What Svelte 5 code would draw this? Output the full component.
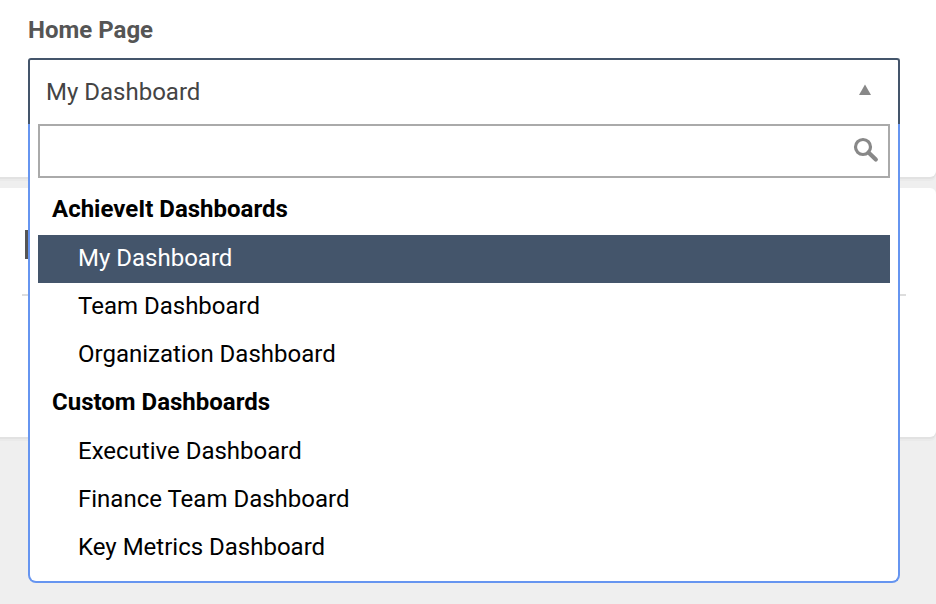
<script>
  const groups = [
    { name: 'AchieveIt Dashboards', items: ['My Dashboard', 'Team Dashboard', 'Organization Dashboard'] },
    { name: 'Custom Dashboards', items: ['Executive Dashboard', 'Finance Team Dashboard', 'Key Metrics Dashboard'] }
  ];

  let open = $state(true);
  let selected = $state('My Dashboard');
  let query = $state('');

  const visible = $derived(
    groups
      .map((g) => ({ ...g, items: g.items.filter((i) => i.toLowerCase().includes(query.toLowerCase())) }))
      .filter((g) => g.items.length)
  );

  function choose(item) {
    selected = item;
    open = false;
  }
</script>

<main>
  <section class="card first">
    <label for="home-page">Home Page</label>
    <div class="select">
      <button
        id="home-page"
        class="trigger"
        type="button"
        aria-haspopup="listbox"
        aria-expanded={open}
        onclick={() => (open = !open)}
      >
        <span>{selected}</span>
        <svg width="14" height="16" viewBox="0 0 14 16" aria-hidden="true"><path d="M7 0.5 13 11H1z" fill="#888" /></svg>
      </button>

      {#if open}
        <div class="panel">
          <div class="search">
            <input type="text" aria-label="Search dashboards" bind:value={query} />
            <svg width="26" height="26" viewBox="0 0 26 26" fill="none" stroke="#888" aria-hidden="true">
              <circle cx="10" cy="10" r="7.5" stroke-width="3.2" />
              <path d="M15.5 15.5 22.8 22.6" stroke-width="4.2" stroke-linecap="round" />
            </svg>
          </div>
          <div class="list" role="listbox" aria-label="Home Page">
            {#each visible as group}
              <div class="group" role="group" aria-label={group.name}>
                <strong>{group.name}</strong>
                {#each group.items as item}
                  <button
                    type="button"
                    role="option"
                    class="option"
                    class:active={item === selected}
                    aria-selected={item === selected}
                    onclick={() => choose(item)}>{item}</button>
                {/each}
              </div>
            {/each}
          </div>
        </div>
      {/if}
    </div>
  </section>

  <section class="card second">
    <div class="heading"></div>
    <hr />
  </section>
</main>

<style>
  :global(body) {
    background: #efefef;
  }

  main {
    display: flex;
    flex-direction: column;
    gap: 11px;
    min-height: 100vh;
    box-sizing: border-box;
    font: 24px/28px Roboto, sans-serif;
    color: #444;
  }

  .card {
    background: #fff;
    box-shadow: 0 2px 0 #e2e2e2, 0 4px 0 #eaeaea;
  }

  .first {
    padding: 16px 36px 53px 28px;
    border-radius: 0 0 6px 0;
  }

  label {
    display: block;
    margin-bottom: 14px;
    font-weight: 700;
    color: #555;
  }

  .select {
    position: relative;
  }

  button,
  input {
    box-sizing: border-box;
    width: 100%;
    font: inherit;
    outline: none;
  }

  .trigger {
    display: flex;
    align-items: center;
    justify-content: space-between;
    height: 66px;
    padding: 0 26px 0 16px;
    border: 2px solid #44556b;
    border-bottom: 0;
    border-radius: 3px 3px 0 0;
    background: #fff;
    color: #444;
    cursor: pointer;
  }

  .panel {
    position: absolute;
    z-index: 1;
    top: 100%;
    left: 0;
    right: 0;
    padding: 0 8px 9px;
    border: 2px solid #6695f0;
    border-top: 0;
    border-radius: 0 0 8px 8px;
    background: #fff;
  }

  .search {
    position: relative;
    margin-bottom: 9px;
  }

  .search input {
    display: block;
    height: 54px;
    padding: 0 48px 0 12px;
    border: 2px solid #aaa;
    border-radius: 0;
    background: #fff;
  }

  .search svg {
    position: absolute;
    top: 13px;
    right: 11px;
  }

  .list {
    display: flex;
    flex-direction: column;
    gap: 1px;
  }

  strong {
    display: block;
    padding: 8px 14px 12px;
    font-weight: 700;
    color: #000;
  }

  .option {
    display: block;
    height: 48px;
    padding: 9px 40px 11px;
    border: 0;
    background: none;
    color: #000;
    text-align: left;
    cursor: pointer;
  }

  .option.active {
    background: #44556b;
    color: #fff;
  }

  .second {
    padding: 42px 30px 141px 22px;
    border-radius: 0 6px 6px 0;
  }

  .heading {
    width: 4px;
    height: 29px;
    margin: 0 0 35px 3px;
    background: #555;
  }

  hr {
    height: 2px;
    margin: 0;
    border: 0;
    background: #ddd;
  }
</style>
